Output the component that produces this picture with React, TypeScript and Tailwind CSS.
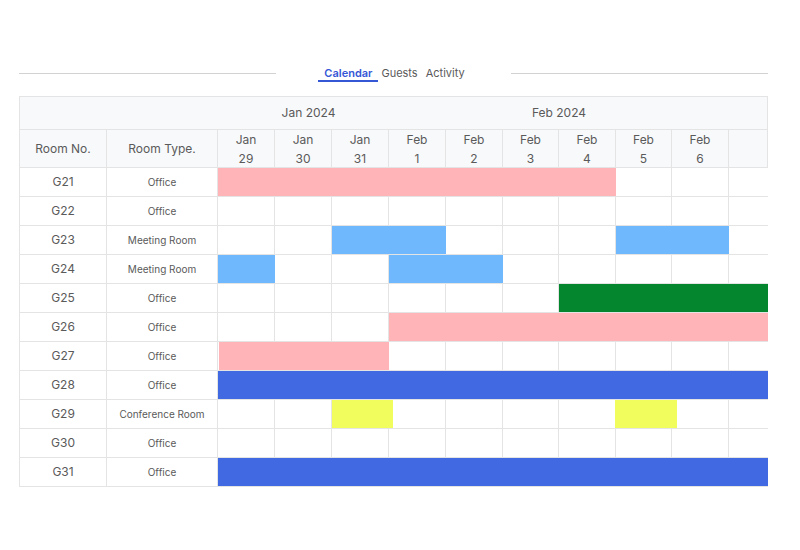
import React from 'react';

const days = [
  { m: 'Jan', d: '29' },
  { m: 'Jan', d: '30' },
  { m: 'Jan', d: '31' },
  { m: 'Feb', d: '1' },
  { m: 'Feb', d: '2' },
  { m: 'Feb', d: '3' },
  { m: 'Feb', d: '4' },
  { m: 'Feb', d: '5' },
  { m: 'Feb', d: '6' },
];

const colors = {
  pink: '#ffb5b8',
  sky: '#6fb8fd',
  green: '#04862f',
  royal: '#4169e1',
  yellow: '#f1fc5d',
};

type Bar = { from: number; to: number; color: string };

// from / to are page x positions of the bar edges
const rooms: { no: string; type: string; bars: Bar[] }[] = [
  { no: 'G21', type: 'Office', bars: [{ from: 218, to: 616, color: colors.pink }] },
  { no: 'G22', type: 'Office', bars: [] },
  {
    no: 'G23',
    type: 'Meeting Room',
    bars: [
      { from: 332, to: 446, color: colors.sky },
      { from: 616, to: 729, color: colors.sky },
    ],
  },
  {
    no: 'G24',
    type: 'Meeting Room',
    bars: [
      { from: 218, to: 275, color: colors.sky },
      { from: 389, to: 503, color: colors.sky },
    ],
  },
  { no: 'G25', type: 'Office', bars: [{ from: 559, to: 768, color: colors.green }] },
  { no: 'G26', type: 'Office', bars: [{ from: 389, to: 768, color: colors.pink }] },
  { no: 'G27', type: 'Office', bars: [{ from: 219, to: 389, color: colors.pink }] },
  { no: 'G28', type: 'Office', bars: [{ from: 218, to: 768, color: colors.royal }] },
  {
    no: 'G29',
    type: 'Conference Room',
    bars: [
      { from: 332, to: 393, color: colors.yellow },
      { from: 615, to: 677, color: colors.yellow },
    ],
  },
  { no: 'G30', type: 'Office', bars: [] },
  { no: 'G31', type: 'Office', bars: [{ from: 218, to: 768, color: colors.royal }] },
];

const gridCols =
  'grid grid-cols-[87px_111px_57px_57px_57px_57px_57px_56px_57px_56px_57px_1fr]';

export default function App() {
  return (
    <div className="w-[800px] h-[550px] bg-white font-['Inter',sans-serif] text-[#5a5a5a]">
      {/* Tabs */}
      <div className="ml-[19px] w-[749px] pt-[62px] flex items-center h-[84px]">
        <div className="flex-1 h-px bg-[#d2d2d2]" />
        <div className="flex items-start h-[22px] pt-[4px] ml-[42px] mr-[46px] text-[11px] leading-[14px]">
          <span className="px-[6px] border-b-2 border-[#3557d6] text-[#3557d6] font-semibold">
            Calendar
          </span>
          <span className="pl-[3px] pr-[4px]">Guests</span>
          <span className="pl-[4px]">Activity</span>
        </div>
        <div className="flex-1 h-px bg-[#d2d2d2]" />
      </div>

      {/* Table */}
      <div className="ml-[19px] mt-[12px] w-[749px] overflow-hidden">
        {/* Month row */}
        <div className={`${gridCols} h-[34px] bg-[#f8f9fa] border border-[#e4e4e4] text-[12px]`}>
          <div className="col-span-2" />
          <div className="col-span-3 flex items-center justify-center pl-[10px]">Jan 2024</div>
          <div className="col-span-6 flex items-center justify-center">Feb 2024</div>
        </div>

        {/* Day row */}
        <div className={`${gridCols} h-[38px] bg-[#f8f9fa] border-x border-b border-[#e4e4e4] text-[12px]`}>
          <div className="flex items-center justify-center border-r border-[#e4e4e4]">Room No.</div>
          <div className="flex items-center justify-center border-r border-[#e4e4e4]">Room Type.</div>
          {days.map((d, i) => (
            <div
              key={i}
              className="flex flex-col items-center justify-center border-r border-[#e4e4e4] leading-[19px]"
            >
              <span>{d.m}</span>
              <span>{d.d}</span>
            </div>
          ))}
          <div />
        </div>

        {/* Body */}
        {rooms.map((r) => (
          <div
            key={r.no}
            className={`${gridCols} relative h-[29px] border-l border-b border-[#e4e4e4] bg-white`}
          >
            <div className="flex items-center justify-center border-r border-[#e4e4e4] text-[12px]">
              {r.no}
            </div>
            <div className="flex items-center justify-center border-r border-[#e4e4e4] text-[10px]">
              {r.type}
            </div>
            {days.map((_, i) => (
              <div key={i} className="border-r border-[#e4e4e4]" />
            ))}
            <div />
            {r.bars.map((b, i) => (
              <div
                key={i}
                className="absolute top-0 bottom-0"
                style={{ left: b.from - 20, width: b.to - b.from, backgroundColor: b.color }}
              />
            ))}
          </div>
        ))}
      </div>
    </div>
  );
}
